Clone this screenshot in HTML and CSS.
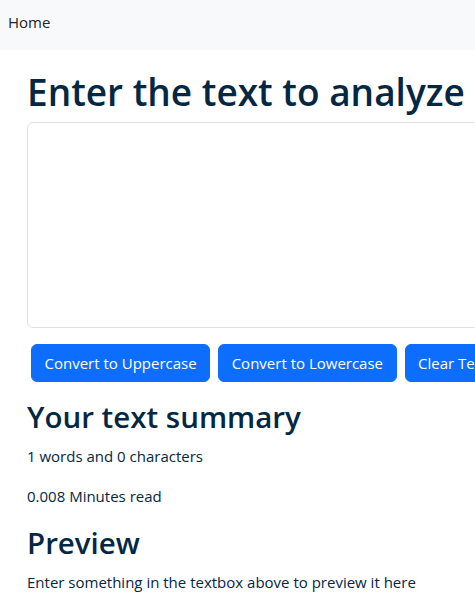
FILE: index.html
```html
<!DOCTYPE html>
<html lang="en">
<head>
<meta charset="utf-8">
<title>TextUtils - Home</title>
<link rel="stylesheet" href="styles.css">
</head>
<body>
<nav class="navbar">
  <a class="nav-link" href="#">Home</a>
</nav>
<main class="container">
  <h1 class="title">Enter the text to analyze</h1>
  <div class="field">
    <textarea class="textbox" rows="8"></textarea>
  </div>
  <div class="actions">
    <button class="btn">Convert to Uppercase</button>
    <button class="btn">Convert to Lowercase</button>
    <button class="btn">Clear Text</button>
    <button class="btn">Copy Text</button>
    <button class="btn">Remove Extra Spaces</button>
  </div>
</main>
<section class="container summary">
  <h2 class="subtitle">Your text summary</h2>
  <p class="line">1 words and 0 characters</p>
  <p class="line">0.008 Minutes read</p>
  <h2 class="subtitle">Preview</h2>
  <p class="line">Enter something in the textbox above to preview it here</p>
</section>
</body>
</html>
```
FILE: styles.css
```css
html, body {
  margin: 0;
  padding: 0;
  overflow: hidden;
  background: #ffffff;
}
body {
  font-family: "Open Sans", "Noto Sans", sans-serif;
  font-size: 15px;
  line-height: 24px;
  color: #042743;
}
.navbar {
  background: #f8f9fa;
  height: 50px;
  box-sizing: border-box;
  display: flex;
  align-items: flex-start;
  padding: 10px 8px 0;
}
.nav-link {
  color: #212529;
  text-decoration: none;
  font-size: 15px;
  line-height: 24px;
}
.container {
  width: 1116px;
  padding-left: 27px;
}
.title {
  font-size: 37px;
  font-weight: 600;
  line-height: 48px;
  margin: 18px 0 6px;
  color: #042743;
}
.field {
  margin-bottom: 16px;
}
.textbox {
  display: block;
  box-sizing: border-box;
  width: 100%;
  height: 206px;
  border: 1px solid #dee2e6;
  border-radius: 6px;
  resize: none;
  margin: 0;
}
.actions {
  display: flex;
  gap: 8px;
  padding-left: 4px;
}
.btn {
  font-family: inherit;
  font-size: 15px;
  line-height: 24px;
  padding: 6px 12.5px;
  border: 1px solid #0d6efd;
  border-radius: 6px;
  background: #0d6efd;
  color: #ffffff;
  white-space: nowrap;
}
.summary {
  margin-top: 16px;
}
.subtitle {
  font-size: 29.5px;
  font-weight: 600;
  line-height: 38px;
  margin: 0 0 8px;
}
.line {
  margin: 0 0 16px;
}
```
